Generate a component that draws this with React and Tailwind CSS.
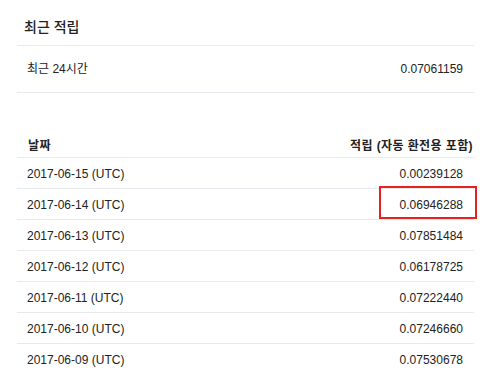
// Recent deposits panel: 24h summary plus a daily history table.

const history = [
  ['2017-06-15 (UTC)', '0.00239128'],
  ['2017-06-14 (UTC)', '0.06946288', true],
  ['2017-06-13 (UTC)', '0.07851484'],
  ['2017-06-12 (UTC)', '0.06178725'],
  ['2017-06-11 (UTC)', '0.07222440'],
  ['2017-06-10 (UTC)', '0.07246660'],
  ['2017-06-09 (UTC)', '0.07530678'],
];

export default function App() {
  return (
    <div
      className="w-[492px] h-[392px] overflow-hidden bg-white px-[17px] pr-[18px] text-[#222] text-[12px]"
      style={{ fontFamily: '"Liberation Sans", "Noto Sans CJK KR", sans-serif' }}
    >
      {/* Summary */}
      <div className="h-[46px] border-b border-[#e6eaef] flex items-center pl-[7px] pt-[10px] text-[14px] font-medium">
        최근 적립
      </div>
      <div className="h-[47px] border-b border-[#e6eaef] flex items-center justify-between pl-[10px] pr-[11px]">
        <span>최근 24시간</span>
        <span>0.07061159</span>
      </div>

      {/* History table */}
      <div className="mt-[48px] h-[17px] border-b border-[#e6eaef] flex items-start justify-between pl-[11px] pr-[1px] font-bold leading-none">
        <span className="-mt-[1px] tracking-[0.4px]">날짜</span>
        <span className="-mt-[1px] tracking-[0.4px]">적립 (자동 환전용 포함)</span>
      </div>
      {history.map(([date, amount, marked], i) => (
        <div
          key={date}
          className={
            'relative h-[31px] flex items-center justify-between pl-[10px] pr-[11px] pt-[1px] ' +
            (i < history.length - 1 ? 'border-b border-[#e6eaef]' : '')
          }
        >
          <span>{date}</span>
          <span>{amount}</span>
          {marked && (
            <div className="absolute top-[-3px] right-[-3px] w-[98px] h-[33px] border-2 border-[#e8211f]" />
          )}
        </div>
      ))}
    </div>
  );
}
